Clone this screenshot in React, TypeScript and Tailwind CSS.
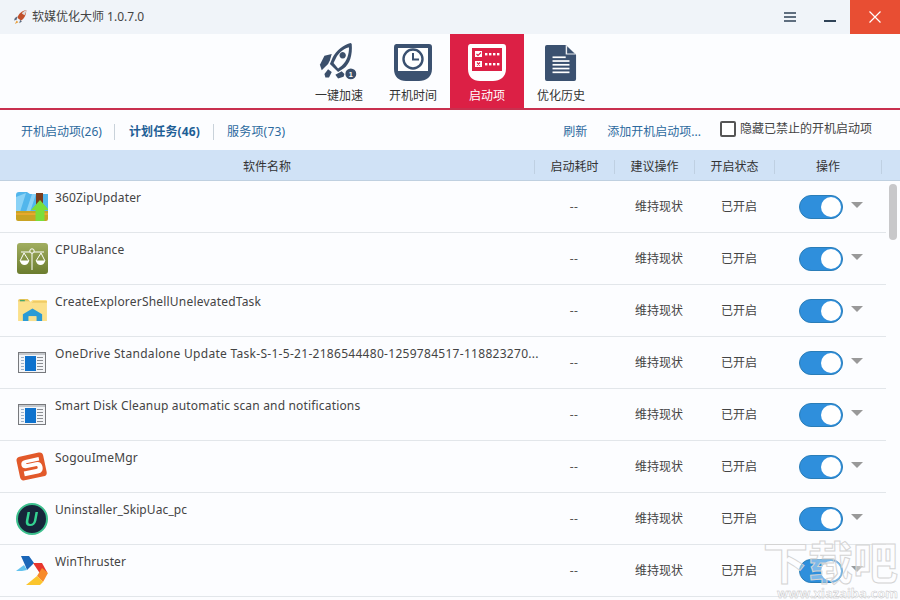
const FONT = "font-['Noto_Sans','Noto_Sans_CJK_SC',sans-serif]";

function Rocket({ className }: { className?: string }) {
  return (
    <svg viewBox="0 0 44 44" className={className}>
      <g fill="#3b4f6b">
        <path d="M35 0 C27 2 19 8 15 16 L12 23 L21 32 L27 28 C34 23 37 13 36 1 Z M32 5 L33 5 C33 12 31 20 25 25 L21 28 L16 22 L19 16 C21 12 26 7 32 5Z" fillRule="evenodd" />
        <path d="M14 12 L6 14 L1 24 L3 30 L10 23 L12 19Z" />
        <path d="M25 31 L28 34 L27 37 L21 39 L18 35 Z" />
        <path d="M10 29 L14 32 L11 38 L7 38 L6 34 Z" />
        <circle cx="35" cy="34" r="6" />
        <path d="M26 10 a3.5 3.5 0 1 0 .1 0Z" />
      </g>
      <text x="35" y="37" textAnchor="middle" fontSize="8" fontWeight="700" fill="#fff" fontFamily="Liberation Sans">1</text>
    </svg>
  );
}

function Clock() {
  return (
    <svg viewBox="0 0 40 38" className="w-[40px] h-[38px]">
      <path d="M3 0 H36 a3 3 0 0 1 3 3 V25 C39 33 33 37 26 37 H13 C6 37 1 33 1 25 V3 a3 3 0 0 1 2-3Z" fill="#3b5170" />
      <rect x="5" y="4" width="30" height="23" fill="#fff" />
      <circle cx="20" cy="15" r="9.5" fill="none" stroke="#3b5170" strokeWidth="2.4" />
      <path d="M20 9 V15.5 H26" fill="none" stroke="#3b5170" strokeWidth="2" />
    </svg>
  );
}

function StartupIcon() {
  return (
    <svg viewBox="0 0 40 38" className="w-[40px] h-[38px]">
      <path d="M3 0 H36 a3 3 0 0 1 3 3 V25 C39 33 33 37 26 37 H13 C6 37 1 33 1 25 V3 a3 3 0 0 1 2-3Z" fill="#fff" />
      <rect x="5" y="4" width="30" height="23" fill="#dc2045" />
      <rect x="8" y="7" width="7" height="6" fill="#fff" />
      <rect x="8" y="17" width="7" height="6" fill="#fff" />
      <path d="M9.5 10 L11 11.5 L14 8.5" stroke="#dc2045" strokeWidth="1.2" fill="none" />
      <path d="M10 18.5 L13 21.5 M13 18.5 L10 21.5" stroke="#dc2045" strokeWidth="1.2" fill="none" />
      {[18, 22, 26, 30].map((x) => (
        <g key={x}>
          <rect x={x} y="9" width="2.4" height="2.4" fill="#fff" />
          <rect x={x} y="19" width="2.4" height="2.4" fill="#fff" />
        </g>
      ))}
    </svg>
  );
}

function DocIcon() {
  return (
    <svg viewBox="0 0 34 38" className="w-[32px] h-[38px]">
      <path d="M2 0 H22 L33 10 V36 a2 2 0 0 1-2 2 H2 a2 2 0 0 1-2-2 V2 a2 2 0 0 1 2-2Z" fill="#3b5170" />
      <path d="M22 0 V10 H33" fill="#fff" opacity="0.9" />
      <path d="M23.5 1.5 L31.5 9 H23.5Z" fill="#3b5170" />
      {[12, 16, 20, 24, 28].map((y, i) => (
        <rect key={y} x="8" y={y} width={i === 0 ? 14 : 18} height="1.8" fill="#fff" />
      ))}
    </svg>
  );
}

function IconZip() {
  return (
    <svg viewBox="0 0 32 32" className="w-[32px] h-[32px]">
      <path d="M0 4 Q0 1 3 1 H11 L14 3 H32 V21 H0Z" fill="#52b6ec" />
      <path d="M0 6 L10 2 L4 21 H0Z M16 3 L10 21 H14 L20 3Z" fill="#8ad2f6" />
      <rect x="20" y="2" width="7" height="18" fill="#7a3c1c" />
      <path d="M0 20 H32 V28 Q32 30 30 30 H2 Q0 30 0 28Z" fill="#c9a324" />
      <rect x="0" y="22" width="32" height="2" fill="#e6a92e" />
      <path d="M24 9 L33 19 H28.5 V30 H19.5 V19 H15Z" fill="#7ade3a" />
    </svg>
  );
}

function IconBalance() {
  return (
    <svg viewBox="0 0 31 31" className="w-[31px] h-[31px]">
      <defs>
        <linearGradient id="bal" x1="0" y1="0" x2="0" y2="1">
          <stop offset="0" stopColor="#a1ae60" />
          <stop offset="1" stopColor="#6b7c2e" />
        </linearGradient>
      </defs>
      <rect width="31" height="31" rx="3" fill="url(#bal)" />
      <g stroke="#fff" strokeWidth="1" fill="none">
        <circle cx="15" cy="8" r="2.2" />
        <path d="M15 10 V27 M4 9 H13 M17 9 H27" />
        <path d="M7 10 L3 18 H12Z M24 10 L19 18 H28Z" />
      </g>
      <path d="M3 18 H12 Q11 22 7.5 22 Q4 22 3 18Z M19 18 H28 Q27 22 23.5 22 Q20 22 19 18Z" fill="#fff" />
    </svg>
  );
}

function IconFolder() {
  return (
    <svg viewBox="0 0 30 26" className="w-[29px] h-[25px]">
      <path d="M0 3 Q0 1 2 1 H10 L13 4 H0Z" fill="#e8c65a" />
      <rect x="2" y="2" width="5" height="1.5" fill="#4aa86a" />
      <path d="M0 4 H13 L15 2 H29 Q30 2 30 3 V24 H0Z" fill="#fbe08a" />
      <path d="M0 5 H14 L16 3 H30 V5 H0Z" fill="#f0cb65" />
      <path d="M5 24 V17 L15 11 L25 17 V24 H19 V19 H11 V24Z" fill="#2a9bd6" />
      <rect x="11" y="19" width="8" height="5" fill="#f7df8f" />
    </svg>
  );
}

function IconWindow() {
  return (
    <svg viewBox="0 0 28 21" className="w-[28px] h-[21px]">
      <rect x="0.5" y="0.5" width="27" height="20" fill="#f3f5f8" stroke="#77797d" />
      <rect x="1" y="1" width="26" height="2" fill="#c5c8cc" />
      <rect x="7" y="4" width="11" height="15" fill="#0e72cd" />
      {[5, 8, 11, 14, 17].map((y) => (
        <g key={y}>
          <rect x="3" y={y} width="3" height="1" fill="#9ab0c8" />
          <rect x="19" y={y} width="6" height="1" fill="#8a8d92" />
        </g>
      ))}
    </svg>
  );
}

function IconSogou() {
  return (
    <svg viewBox="0 0 33 31" className="w-[33px] h-[31px]">
      <g transform="rotate(-12 16 15)">
        <rect x="2" y="3" width="28" height="25" rx="4" fill="#e2592a" />
        <path d="M25 7.5 H11 Q6 7.5 6 12 Q6 16 11 16 H20 Q22 16 22 17.5 Q22 19 20 19 H7 V24 H21 Q27 24 27 18 Q27 12 21 12 H12.5 Q11 12 11 11.5 Q11 11 12.5 11 H25Z" fill="#fff" />
      </g>
    </svg>
  );
}

function IconUninstaller() {
  return (
    <svg viewBox="0 0 32 32" className="w-[32px] h-[32px]">
      <circle cx="16" cy="16" r="15" fill="#16263a" stroke="#3cc08d" strokeWidth="2" />
      <path d="M11.5 9 L9.8 18 Q9 23 14 23 Q19 23 20.3 18 L22 9 H19.5 L17.8 18 Q17 21 14.5 21 Q12 21 12.4 18 L14 9Z" fill="#34d391" />
    </svg>
  );
}

function IconWin() {
  return (
    <svg viewBox="0 0 32 32" className="w-[32px] h-[32px]">
      <path d="M5 1 H13 L18 8 L11 15 L9 10Z" fill="#1a66b8" />
      <path d="M8 10 L11 15 L6 16 H0Z" fill="#62c2ee" />
      <path d="M17 8 L26 8 L31 17 L25 20Z" fill="#e8362e" />
      <path d="M26 13 L32 18 L27 27 L21 21Z" fill="#f78a2a" />
      <path d="M21 21 L27 27 L24 30 H10 Z" fill="#fbc52d" />
    </svg>
  );
}

function Toggle() {
  return (
    <div className="flex h-[24px] w-[44px] items-center justify-end rounded-full border border-[#2a7db8] bg-[#2f8fdc] pr-[1px]">
      <div className="h-[20px] w-[20px] rounded-full bg-white" />
    </div>
  );
}

const rows = [
  { name: "360ZipUpdater", icon: <IconZip />, track: "tracking-[0.15px]" },
  { name: "CPUBalance", icon: <IconBalance />, track: "tracking-[0.15px]" },
  { name: "CreateExplorerShellUnelevatedTask", icon: <IconFolder />, track: "tracking-[0.2px]" },
  { name: "OneDrive Standalone Update Task-S-1-5-21-2186544480-1259784517-118823270...", icon: <IconWindow />, track: "tracking-[0.29px]" },
  { name: "Smart Disk Cleanup automatic scan and notifications", icon: <IconWindow />, track: "tracking-[0.17px]" },
  { name: "SogouImeMgr", icon: <IconSogou />, track: "tracking-[0.15px]" },
  { name: "Uninstaller_SkipUac_pc", icon: <IconUninstaller />, track: "tracking-[0.1px]" },
  { name: "WinThruster", icon: <IconWin />, track: "tracking-[0.1px]" },
];

function Tab({ label, icon, active }: { label: string; icon: React.ReactNode; active?: boolean }) {
  return (
    <div className={`flex w-[74px] flex-col items-center pt-[9px] ${active ? "bg-[#dc2045] text-white" : "text-[#333]"}`}>
      <div className="flex h-[40px] items-center justify-center">{icon}</div>
      <div className="mt-[5px] text-[12px] leading-[16px]">{label}</div>
    </div>
  );
}

export default function App() {
  return (
    <div className={`${FONT} relative h-[600px] w-[900px] overflow-hidden bg-[#fcfdff] text-[12px] text-[#444]`}>
      {/* Title bar */}
      <div className="flex h-[34px] items-center bg-[#f0f4f9]">
        <svg viewBox="0 0 16 16" className="ml-[14px] h-[16px] w-[14px]">
          <path d="M14 0 C9 1 5 4 4 9 L8 12 C12 10 14 5 14 0Z" fill="#c2502a" />
          <path d="M14 0 C12 1 10 2 9 4 L12 6 C13 4 14 2 14 0Z" fill="#ddd" />
          <path d="M4 7 L1 9 L0 12 L3 11Z M7 11 L6 15 L9 13Z" fill="#5a6a80" />
          <path d="M3 12 L1 16 L5 14Z" fill="#e8a040" />
        </svg>
        <div className="ml-[4px] text-[12px] text-[#444]">软媒优化大师 1.0.7.0</div>
        <div className="ml-auto flex h-full items-center">
          <svg viewBox="0 0 12 10" className="h-[10px] w-[12px]">
            <path d="M0 1 H12 M0 5 H12 M0 9 H12" stroke="#2f4257" strokeWidth="1.6" />
          </svg>
          <div className="ml-[28px] mt-[8px] h-[2px] w-[12px] bg-[#2f4257]" />
          <div className="ml-[14px] flex h-full w-[50px] items-center justify-center bg-[#e84e33]">
            <svg viewBox="0 0 12 12" className="h-[12px] w-[12px]">
              <path d="M0.5 0.5 L11.5 11.5 M11.5 0.5 L0.5 11.5" stroke="#fff" strokeWidth="1.2" />
            </svg>
          </div>
        </div>
      </div>

      {/* Nav */}
      <div className="flex h-[76px] justify-center border-b-2 border-[#c8304f]">
        <Tab label="一键加速" icon={<Rocket className="h-[40px] w-[40px]" />} />
        <Tab label="开机时间" icon={<Clock />} />
        <Tab label="启动项" icon={<StartupIcon />} active />
        <Tab label="优化历史" icon={<DocIcon />} />
      </div>

      {/* Toolbar */}
      <div className="flex h-[40px] items-center pl-[21px] pt-[4px] text-[12px] text-[#2c6a9e]">
        <span>开机启动项(26)</span>
        <span className="ml-[12px] mr-[14px] h-[16px] w-px bg-[#c9d2da]" />
        <span className="font-bold tracking-[0.15px] text-[#1f5f96]">计划任务(46)</span>
        <span className="ml-[13px] mr-[13px] h-[16px] w-px bg-[#c9d2da]" />
        <span className="tracking-[0.2px]">服务项(73)</span>
        <span className="ml-auto">刷新</span>
        <span className="ml-[20px]">添加开机启动项...</span>
        <span className="mb-[6px] ml-[19px] h-[16px] w-[16px] rounded-[2px] border-2 border-[#555] bg-white" />
        <span className="mb-[6px] ml-[4px] mr-[28px] text-[#444]">隐藏已禁止的开机启动项</span>
      </div>

      {/* Header */}
      <div className="flex h-[31px] items-center border-b border-[#bfd0e0] bg-[#d0e2f6] pt-[4px] text-[#333]">
        <div className="w-[534px] text-center">软件名称</div>
        <div className="h-[14px] w-px bg-[#bfd0e2]" />
        <div className="w-[79px] text-center">启动耗时</div>
        <div className="h-[14px] w-px bg-[#bfd0e2]" />
        <div className="w-[79px] text-center">建议操作</div>
        <div className="h-[14px] w-px bg-[#bfd0e2]" />
        <div className="w-[79px] text-center">开启状态</div>
        <div className="h-[14px] w-px bg-[#bfd0e2]" />
        <div className="w-[106px] text-center">操作</div>
        <div className="h-[14px] w-px bg-[#bfd0e2]" />
      </div>

      {/* Rows */}
      <div className="w-[886px]">
        {rows.map((r) => (
          <div key={r.name} className="flex h-[52px] border-b border-[#e2e6ea]">
            <div className="flex w-[55px] items-center pl-[16px] pr-[7px]">
              <div className="flex h-[32px] w-[32px] shrink-0 items-center justify-center">{r.icon}</div>
            </div>
            <div className={`w-[490px] whitespace-nowrap pt-[8px] text-[#444] ${r.track}`}>{r.name}</div>
            <div className="flex w-[58px] items-center justify-center pt-[1px] tracking-[0.5px] text-[#555]">--</div>
            <div className="ml-[16px] flex w-[80px] items-center justify-center pt-[1px]">维持现状</div>
            <div className="flex w-[80px] items-center justify-center pt-[1px]">已开启</div>
            <div className="flex items-center pl-[20px] pt-[1px]">
              <Toggle />
              <div className="mb-[4px] ml-[8px] h-0 w-0 border-x-[6px] border-t-[6px] border-x-transparent border-t-[#999]" />
            </div>
          </div>
        ))}
      </div>

      {/* Scrollbar */}
      <div className="absolute left-[889px] top-[184px] h-[56px] w-[8px] rounded-full bg-[#c8c8ca]" />

      {/* Watermark */}
      <div className="pointer-events-none absolute left-[763px] top-[540px] flex w-[135px] flex-col items-end">
        <div className="text-[45px] font-bold leading-[46px] text-white/40 [-webkit-text-stroke:1px_#d4d4d4]">下载吧</div>
        <div className="mt-[1px] text-[13px] font-bold leading-[13px] text-white/50 [-webkit-text-stroke:0.4px_#bcbcbc]">www.xiazaiba.com</div>
      </div>
    </div>
  );
}
